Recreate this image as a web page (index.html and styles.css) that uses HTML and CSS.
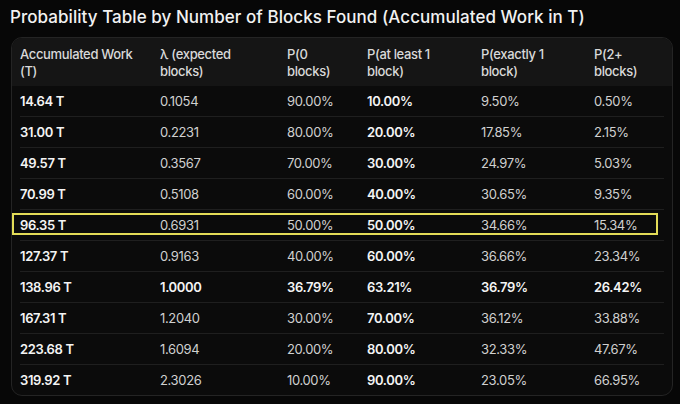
FILE: index.html
```html
<!DOCTYPE html>
<html>
<head>
<meta charset="utf-8">
<link rel="stylesheet" href="styles.css">
</head>
<body>
<h1 class="title">Probability Table by Number of Blocks Found (Accumulated Work in T)</h1>
<div class="card">
  <div class="head row">
    <div>Accumulated Work<br>(T)</div>
    <div>λ (expected<br>blocks)</div>
    <div>P(0<br>blocks)</div>
    <div>P(at least 1<br>block)</div>
    <div>P(exactly 1<br>block)</div>
    <div>P(2+<br>blocks)</div>
  </div>
  <div class="body">
    <div class="row"><div class="b">14.64 T</div><div>0.1054</div><div>90.00%</div><div class="b">10.00%</div><div>9.50%</div><div>0.50%</div></div>
    <div class="row"><div class="b">31.00 T</div><div>0.2231</div><div>80.00%</div><div class="b">20.00%</div><div>17.85%</div><div>2.15%</div></div>
    <div class="row"><div class="b">49.57 T</div><div>0.3567</div><div>70.00%</div><div class="b">30.00%</div><div>24.97%</div><div>5.03%</div></div>
    <div class="row"><div class="b">70.99 T</div><div>0.5108</div><div>60.00%</div><div class="b">40.00%</div><div>30.65%</div><div>9.35%</div></div>
    <div class="row hl"><div class="b">96.35 T</div><div>0.6931</div><div>50.00%</div><div class="b">50.00%</div><div>34.66%</div><div>15.34%</div></div>
    <div class="row"><div class="b">127.37 T</div><div>0.9163</div><div>40.00%</div><div class="b">60.00%</div><div>36.66%</div><div>23.34%</div></div>
    <div class="row"><div class="b">138.96 T</div><div class="b">1.0000</div><div class="b">36.79%</div><div class="b">63.21%</div><div class="b">36.79%</div><div class="b">26.42%</div></div>
    <div class="row"><div class="b">167.31 T</div><div>1.2040</div><div>30.00%</div><div class="b">70.00%</div><div>36.12%</div><div>33.88%</div></div>
    <div class="row"><div class="b">223.68 T</div><div>1.6094</div><div>20.00%</div><div class="b">80.00%</div><div>32.33%</div><div>47.67%</div></div>
    <div class="row"><div class="b">319.92 T</div><div>2.3026</div><div>10.00%</div><div class="b">90.00%</div><div>23.05%</div><div>66.95%</div></div>
  </div>
</div>
</body>
</html>
```
FILE: styles.css
```css
html, body {
  margin: 0;
  background: #070707;
}
body {
  padding: 6px 7px 0 11px;
  font-family: Inter, "Noto Sans", sans-serif;
  color: #e6e6e6;
}
.title {
  margin: 0 0 9px -1px;
  font-size: 17px;
  line-height: 22px;
  font-weight: 500;
  color: #f2f2f2;
  letter-spacing: 0.05px;
}
.card {
  width: 660px;
  border: 1px solid #242424;
  border-radius: 11px;
  background: #0b0b0b;
  overflow: hidden;
}
.row {
  display: grid;
  grid-template-columns: 140px 127px 80px 114px 113px 1fr;
  font-size: 13px;
  letter-spacing: -0.35px;
}
.head {
  background: #151515;
  padding: 8px 8px 6px 8px;
  line-height: 17px;
  font-weight: 500;
  color: #d9d9d9;
}
.body {
  padding: 0 8px;
}
.body .row {
  height: 30px;
  align-items: center;
  border-bottom: 1px solid #1f1f1f;
  color: #d0d0d0;
  font-weight: 400;
  position: relative;
}
.body .row:last-child {
  border-bottom: none;
}
.body .b {
  font-weight: 560;
  color: #f4f4f4;
}
.hl::after {
  content: "";
  position: absolute;
  left: -8px;
  right: 6px;
  top: 3px;
  bottom: 5px;
  border: 2px solid #e3dc57;
}
```
